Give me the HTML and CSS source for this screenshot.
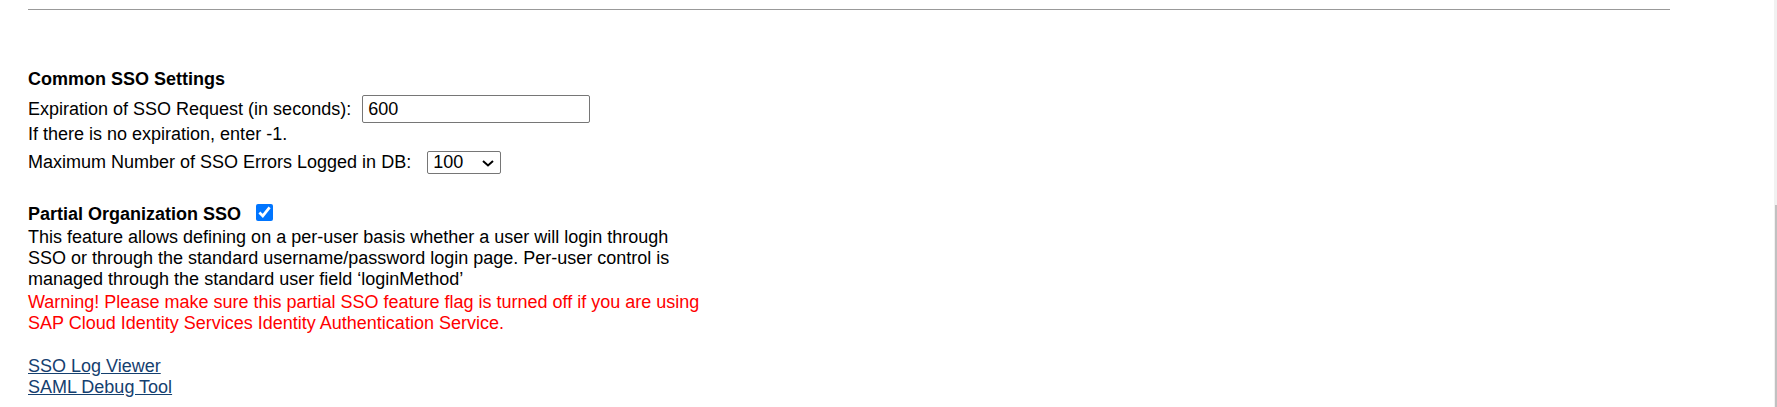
FILE: index.html
```html
<!DOCTYPE html>
<html lang="en">
<head>
<meta charset="utf-8">
<title>SSO Settings</title>
<link rel="stylesheet" href="styles.css">
</head>
<body>
<div class="page">
  <hr class="rule">
  <section class="settings">
    <div class="heading">Common SSO Settings</div>
    <div class="row row-input">
      <label class="label" for="exp">Expiration of SSO Request (in seconds):</label>
      <input id="exp" class="text-input" type="text" value="600">
    </div>
    <div class="hint">If there is no expiration, enter -1.</div>
    <div class="row row-select">
      <label class="label" for="maxerr">Maximum Number of SSO Errors Logged in DB:</label>
      <select id="maxerr" class="select"><option>100</option></select>
    </div>
  </section>
  <section class="partial">
    <div class="heading partial-heading">Partial Organization SSO<input class="check" type="checkbox" checked></div>
    <p class="desc">This feature allows defining on a per-user basis whether a user will login through SSO or through the standard username/password login page. Per-user control is managed through the standard user field ‘loginMethod’</p>
    <p class="warning">Warning! Please make sure this partial SSO feature flag is turned off if you are using SAP Cloud Identity Services Identity Authentication Service.</p>
  </section>
  <nav class="links">
    <a href="#" class="link">SSO Log Viewer</a>
    <a href="#" class="link">SAML Debug Tool</a>
  </nav>
</div>
<div class="scrollbar"><div class="scroll-thumb"></div></div>
</body>
</html>
```
FILE: styles.css
```css
html, body {
  margin: 0;
  padding: 0;
  background: #ffffff;
}
body {
  font-family: "Liberation Sans", Arial, sans-serif;
  font-size: 18px;
  line-height: 21px;
  color: #000000;
}
.page {
  padding-left: 28px;
  padding-top: 9px;
}
.rule {
  margin: 0;
  width: 1642px;
  height: 0;
  border: 0;
  border-top: 1px solid #999999;
}
.settings {
  margin-top: 59px;
}
.heading {
  font-weight: bold;
  height: 21px;
}
.row {
  display: flex;
  align-items: center;
}
.row-input {
  margin-top: 5px;
  height: 28px;
}
.text-input {
  box-sizing: border-box;
  width: 228px;
  height: 28px;
  margin: 0 0 0 11px;
  padding: 0 5px;
  border: 1px solid #767676;
  border-radius: 2px;
  font-family: "Liberation Sans", Arial, sans-serif;
  font-size: 18px;
  color: #000000;
  background: #ffffff;
  outline: none;
}
.hint {
  margin-top: 1px;
}
.row-select {
  margin-top: 6px;
  height: 23px;
}
.select {
  box-sizing: border-box;
  -webkit-appearance: none;
  appearance: none;
  width: 74px;
  height: 23px;
  margin: 0 0 0 16px;
  padding: 0 0 0 5px;
  border: 1px solid #767676;
  border-radius: 2px;
  font-family: "Liberation Sans", Arial, sans-serif;
  font-size: 18px;
  line-height: 21px;
  color: #000000;
  background-color: #ffffff;
  background-image: url("data:image/svg+xml;utf8,<svg xmlns='http://www.w3.org/2000/svg' width='12' height='7' viewBox='0 0 12 7'><path d='M1 1 L6 5.5 L11 1' fill='none' stroke='black' stroke-width='2'/></svg>");
  background-repeat: no-repeat;
  background-position: 54px 8px;
}
.partial {
  margin-top: 29px;
}
.partial-heading {
  height: 21px;
}
.check {
  width: 17px;
  height: 17px;
  margin: 0 0 0 15px;
  vertical-align: baseline;
  position: relative;
  top: 1px;
}
.desc {
  width: 680px;
  margin: 3px 0 0 0;
}
.warning {
  width: 680px;
  margin: 2px 0 0 0;
  color: #ff0000;
}
.links {
  display: flex;
  flex-direction: column;
  align-items: flex-start;
  margin-top: 22px;
}
.link {
  color: #15406f;
  text-decoration: underline;
}
.scrollbar {
  position: fixed;
  top: 0;
  right: 0;
  width: 3px;
  height: 100%;
  background: #f1f1f1;
}
.scroll-thumb {
  position: absolute;
  top: 205px;
  right: 0;
  width: 2px;
  bottom: 0;
  background: #c1c1c1;
}
```
